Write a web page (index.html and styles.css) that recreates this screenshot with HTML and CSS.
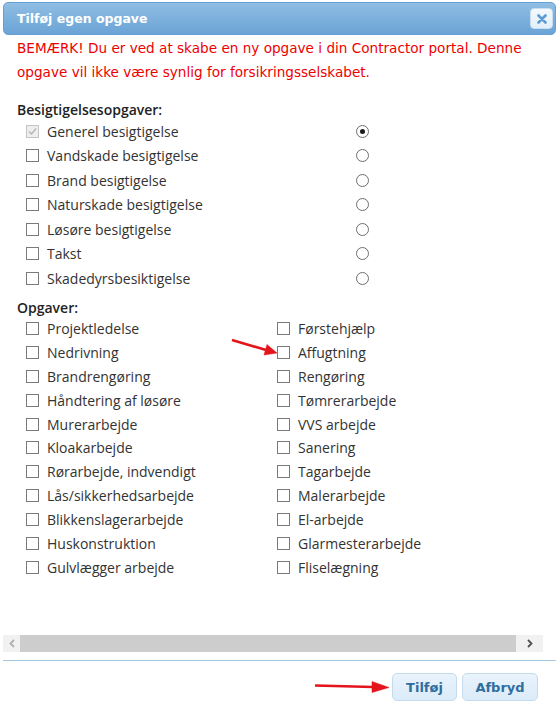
FILE: index.html
```html
<!DOCTYPE html>
<html lang="da">
<head>
<meta charset="utf-8">
<title>Tilføj egen opgave</title>
<link rel="stylesheet" href="styles.css">
</head>
<body>
<div class="dialog">
  <div class="titlebar">
    <span class="title">Tilføj egen opgave</span>
    <span class="close"><svg width="10" height="10" viewBox="0 0 10 10"><path d="M1.5 1.5 L8.5 8.5 M8.5 1.5 L1.5 8.5" stroke="#5d9ad2" stroke-width="2.6" stroke-linecap="round"/></svg></span>
  </div>
  <div class="content">
    <p class="notice">BEMÆRK! Du er ved at skabe en ny opgave i din Contractor portal. Denne opgave vil ikke være synlig for forsikringsselskabet.</p>
    <h3 class="heading">Besigtigelsesopgaver:</h3>
    <div class="insp">
      <div class="irow"><span class="item"><span class="cb disabled"><svg width="11" height="11" viewBox="0 0 11 11"><path d="M2 5.5 L4.5 8 L9 2.5" fill="none" stroke="#b4b4b4" stroke-width="1.4"/></svg></span>Generel besigtigelse</span><span class="radio on"></span></div>
      <div class="irow"><span class="item"><span class="cb"></span>Vandskade besigtigelse</span><span class="radio"></span></div>
      <div class="irow"><span class="item"><span class="cb"></span>Brand besigtigelse</span><span class="radio"></span></div>
      <div class="irow"><span class="item"><span class="cb"></span>Naturskade besigtigelse</span><span class="radio"></span></div>
      <div class="irow"><span class="item"><span class="cb"></span>Løsøre besigtigelse</span><span class="radio"></span></div>
      <div class="irow"><span class="item"><span class="cb"></span>Takst</span><span class="radio"></span></div>
      <div class="irow"><span class="item"><span class="cb"></span>Skadedyrsbesiktigelse</span><span class="radio"></span></div>
    </div>
    <h3 class="heading heading2">Opgaver:</h3>
    <div class="tasks">
      <span class="item"><span class="cb"></span>Projektledelse</span>
      <span class="item"><span class="cb"></span>Førstehjælp</span>
      <span class="item"><span class="cb"></span>Nedrivning</span>
      <span class="item"><span class="cb"></span>Affugtning</span>
      <span class="item"><span class="cb"></span>Brandrengøring</span>
      <span class="item"><span class="cb"></span>Rengøring</span>
      <span class="item"><span class="cb"></span>Håndtering af løsøre</span>
      <span class="item"><span class="cb"></span>Tømrerarbejde</span>
      <span class="item"><span class="cb"></span>Murerarbejde</span>
      <span class="item"><span class="cb"></span>VVS arbejde</span>
      <span class="item"><span class="cb"></span>Kloakarbejde</span>
      <span class="item"><span class="cb"></span>Sanering</span>
      <span class="item"><span class="cb"></span>Rørarbejde, indvendigt</span>
      <span class="item"><span class="cb"></span>Tagarbejde</span>
      <span class="item"><span class="cb"></span>Lås/sikkerhedsarbejde</span>
      <span class="item"><span class="cb"></span>Malerarbejde</span>
      <span class="item"><span class="cb"></span>Blikkenslagerarbejde</span>
      <span class="item"><span class="cb"></span>El-arbejde</span>
      <span class="item"><span class="cb"></span>Huskonstruktion</span>
      <span class="item"><span class="cb"></span>Glarmesterarbejde</span>
      <span class="item"><span class="cb"></span>Gulvlægger arbejde</span>
      <span class="item"><span class="cb"></span>Fliselægning</span>
    </div>
  </div>
  <div class="hscroll">
    <span class="sbtn left"><svg width="6" height="9" viewBox="0 0 6 9"><path d="M5 1 L1.5 4.5 L5 8" fill="none" stroke="#b0b0b0" stroke-width="1.8"/></svg></span>
    <span class="thumb"></span>
    <span class="sbtn right"><svg width="6" height="9" viewBox="0 0 6 9"><path d="M1 1 L4.5 4.5 L1 8" fill="none" stroke="#505050" stroke-width="1.8"/></svg></span>
  </div>
  <div class="footer">
    <button class="btn btn-add">Tilføj</button>
    <button class="btn btn-cancel">Afbryd</button>
  </div>
</div>
<svg class="arrows" width="556" height="709" viewBox="0 0 556 709">
  <g fill="#e3141c" stroke="#e3141c">
    <line x1="232" y1="340" x2="266" y2="350" stroke-width="2.6"/>
    <polygon points="277,353 264,355 267,344.5" stroke-width="0.5"/>
    <line x1="315" y1="685.5" x2="373" y2="687" stroke-width="2.6"/>
    <polygon points="389,687.5 372,692.5 372,681.5" stroke-width="0.5"/>
  </g>
</svg>
</body>
</html>
```
FILE: styles.css
```css
html, body {
  margin: 0;
  padding: 0;
  background: #ffffff;
}
body {
  width: 556px;
  height: 709px;
  overflow: hidden;
  position: relative;
  font-family: "Open Sans", "Noto Sans", sans-serif;
}
.dialog {
  padding: 2px 0 0 3px;
}
.titlebar {
  box-sizing: border-box;
  width: 553px;
  height: 33px;
  display: flex;
  align-items: center;
  justify-content: space-between;
  padding: 0 2px 0 13px;
  background: linear-gradient(#90bde3, #6aa4d6);
  border: 1px solid #64a0d4;
  border-radius: 5px;
}
.title {
  font-family: "DejaVu Sans", Verdana, sans-serif;
  font-weight: bold;
  font-size: 12.5px;
  color: #ffffff;
}
.close {
  box-sizing: border-box;
  width: 23px;
  height: 21px;
  display: flex;
  align-items: center;
  justify-content: center;
  background: linear-gradient(#f4f9fd, #e3eff9);
  border: 1px solid #c9def0;
  border-radius: 4px;
}
.content {
  box-sizing: border-box;
  height: 600px;
  padding: 1px 20px 0 14px;
}
.notice {
  margin: 0;
  font-family: "DejaVu Sans", Verdana, sans-serif;
  font-size: 13.6px;
  line-height: 24px;
  color: #ee0000;
}
.heading {
  margin: 17px 0 0;
  font-size: 14px;
  font-weight: 600;
  line-height: 18px;
  color: #222222;
}
.heading2 {
  margin-top: 8px;
}
.insp {
  padding-left: 9px;
}
.irow {
  display: grid;
  grid-template-columns: 330px 13px;
  align-items: center;
  height: 24.5px;
}
.item {
  display: flex;
  align-items: center;
  font-size: 14px;
  color: #333333;
  white-space: nowrap;
}
.cb {
  box-sizing: border-box;
  width: 13px;
  height: 13px;
  margin-right: 8px;
  border: 1px solid #7a7a7a;
  background: #ffffff;
  display: flex;
  align-items: center;
  justify-content: center;
  flex: none;
}
.cb.disabled {
  border-color: #c4c4c4;
  background: #eeeeee;
}
.radio {
  box-sizing: border-box;
  width: 13px;
  height: 13px;
  border: 1px solid #6e6e6e;
  border-radius: 50%;
  background: #ffffff;
  display: flex;
  align-items: center;
  justify-content: center;
}
.radio.on::after {
  content: "";
  width: 5px;
  height: 5px;
  border-radius: 50%;
  background: #1a1a1a;
}
.tasks {
  padding-left: 9px;
  display: grid;
  grid-template-columns: 251px 1fr;
  grid-auto-rows: 23.9px;
  align-items: center;
}
.hscroll {
  display: flex;
  width: 540px;
  height: 17px;
  background: #f1f1f1;
}
.sbtn {
  width: 17px;
  display: flex;
  align-items: center;
  justify-content: center;
  background: #f1f1f1;
}
.sbtn.right {
  width: 27px;
}
.thumb {
  flex: 1;
  background: #cdcdcd;
}
.footer {
  margin-top: 8px;
  border-top: 1px solid #a6c9e2;
  padding: 12px 18px 0 0;
  display: flex;
  justify-content: flex-end;
  gap: 5px;
}
.btn {
  box-sizing: border-box;
  height: 28px;
  padding: 0;
  font-family: "DejaVu Sans", Verdana, sans-serif;
  font-weight: bold;
  font-size: 13px;
  color: #2e6e9e;
  background: linear-gradient(#e9f3fc, #dcebf9);
  border: 1px solid #c5dbec;
  border-radius: 5px;
}
.btn-add {
  width: 65px;
}
.btn-cancel {
  width: 76px;
}
.arrows {
  position: absolute;
  top: 0;
  left: 0;
  pointer-events: none;
}
```
